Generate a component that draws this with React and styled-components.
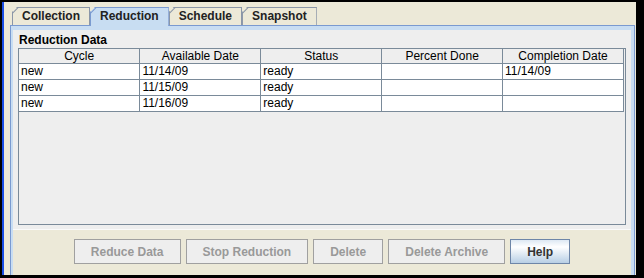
import styled, { createGlobalStyle } from 'styled-components';

const GlobalStyle = createGlobalStyle`
  html, body {
    margin: 0;
    padding: 0;
    background: #000;
  }
  body {
    font-family: "Liberation Sans", Arial, sans-serif;
  }
`;

const Screen = styled.div`
  width: 644px;
  height: 278px;
  box-sizing: border-box;
  padding: 2px 8px 3px 2px;
  background: #000;
  overflow: hidden;
`;

const Window = styled.div`
  height: 100%;
  box-sizing: border-box;
  border-left: 2px solid #1a4fe6;
  background: #ece9d8;
  padding-top: 5px;
  display: flex;
  flex-direction: column;
  overflow: hidden;
`;

const TabRow = styled.div`
  display: flex;
  align-items: flex-start;
  height: 18px;
  margin-left: 8px;
`;

const Tab = styled.div`
  position: relative;
  z-index: ${(p) => (p.$active ? 2 : 1)};
  height: ${(p) => (p.$active ? '19px' : '18px')};
  box-sizing: border-box;
  padding: 0 9px;
  border: 1px solid ${(p) => (p.$active ? '#7a9ad0' : '#8a96a8')};
  border-bottom: none;
  background: ${(p) => (p.$active ? '#c8ddf2' : '#ece9d8')};
  color: #222;
  font-size: 12px;
  font-weight: bold;
  line-height: 17px;
  white-space: nowrap;
  clip-path: polygon(5px 0, 100% 0, 100% 100%, 0 100%, 0 5px);

  &::before {
    content: '';
    position: absolute;
    top: 0;
    left: 0;
    width: 7.5px;
    height: 1px;
    background: ${(p) => (p.$active ? '#7a9ad0' : '#8a96a8')};
    transform-origin: 0 0;
    transform: translate(-1px, 5px) rotate(-45deg);
  }
`;

const Pane = styled.div`
  flex: 1;
  margin: 0 1px 0 6px;
  border: 1px solid #7a9ad0;
  border-bottom: none;
  background: #c8ddf2;
  padding: 4px 3px 0 2px;
  display: flex;
  flex-direction: column;
`;

const Content = styled.div`
  flex: 1;
  background: #ece9d8;
  display: flex;
  flex-direction: column;
`;

const DataPanel = styled.div`
  background: #eeeeee;
  padding: 3px 5px 4px 5px;
  border-bottom: 1px solid #fafafa;
`;

const Title = styled.div`
  font-size: 12px;
  font-weight: bold;
  line-height: 15px;
  padding-left: 1px;
  color: #000;
`;

const TableScroll = styled.div`
  height: 177px;
  box-sizing: border-box;
  border: 1px solid #7a8a99;
  background: #eeeeee;
  overflow: hidden;
`;

const Grid = styled.table`
  width: calc(100% - 1px);
  border-collapse: collapse;
  table-layout: fixed;
  font-size: 12px;
`;

const HeadCell = styled.th`
  padding: 0;
  font-weight: normal;
  line-height: 14px;
  text-align: center;
  color: #000;
  background: #eeeeee;
  border-right: 1px solid #7a8a99;
  border-bottom: 1px solid #7a8a99;
  white-space: nowrap;
`;

const Cell = styled.td`
  padding: 0 2px;
  line-height: 15px;
  color: #000;
  background: #fff;
  border-right: 1px solid #7a8a99;
  border-bottom: 1px solid #7a8a99;
  white-space: nowrap;
  overflow: hidden;
`;

const ButtonBar = styled.div`
  display: flex;
  justify-content: center;
  gap: 5px;
  padding-top: 9px;
`;

const Button = styled.button`
  height: 25px;
  box-sizing: border-box;
  padding: 0 16px;
  margin: 0;
  font-family: "Liberation Sans", Arial, sans-serif;
  font-size: 12px;
  font-weight: bold;
  border: 1px solid ${(p) => (p.$primary ? '#6e86a8' : '#a0a0a0')};
  color: ${(p) => (p.$primary ? '#333' : '#999')};
  background: ${(p) =>
    p.$primary
      ? 'linear-gradient(to bottom, #dde8f3 0%, #ffffff 30%, #b8cfe5 100%)'
      : '#eeeeee'};
  white-space: nowrap;
`;

const columns = ['Cycle', 'Available Date', 'Status', 'Percent Done', 'Completion Date'];

const rows = [
  ['new', '11/14/09', 'ready', '', '11/14/09'],
  ['new', '11/15/09', 'ready', '', ''],
  ['new', '11/16/09', 'ready', '', ''],
];

const tabs = ['Collection', 'Reduction', 'Schedule', 'Snapshot'];

const App = () => {
  return (
    <Screen>
      <GlobalStyle />
      <Window>
        <TabRow>
          {tabs.map((t) => (
            <Tab key={t} $active={t === 'Reduction'}>
              {t}
            </Tab>
          ))}
        </TabRow>
        <Pane>
          <Content>
            <DataPanel>
              <Title>Reduction Data</Title>
              <TableScroll>
                <Grid>
                  <thead>
                    <tr>
                      {columns.map((c) => (
                        <HeadCell key={c}>{c}</HeadCell>
                      ))}
                    </tr>
                  </thead>
                  <tbody>
                    {rows.map((r, i) => (
                      <tr key={i}>
                        {r.map((v, j) => (
                          <Cell key={j}>{v}</Cell>
                        ))}
                      </tr>
                    ))}
                  </tbody>
                </Grid>
              </TableScroll>
            </DataPanel>
            <ButtonBar>
              <Button disabled>Reduce Data</Button>
              <Button disabled>Stop Reduction</Button>
              <Button disabled>Delete</Button>
              <Button disabled>Delete Archive</Button>
              <Button $primary>Help</Button>
            </ButtonBar>
          </Content>
        </Pane>
      </Window>
    </Screen>
  );
};

export default App;
